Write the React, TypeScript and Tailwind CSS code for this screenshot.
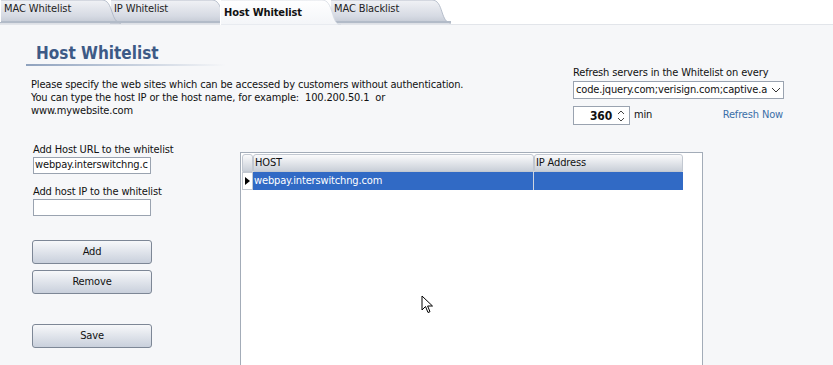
import React from "react";

const font = { fontFamily: '"DejaVu Sans Condensed", "DejaVu Sans", Tahoma, sans-serif' };

function Tab({ label, active, z }: { label: string; active?: boolean; z: string }) {
  const id = active ? "gA" : "gI";
  return (
    <div className={`relative h-[25px] w-[110px] shrink-0 ${z}`}>
      <svg className="absolute left-0 top-0" width="124" height="25" viewBox="0 0 124 25">
        <defs>
          <linearGradient id={id} x1="0" y1="0" x2="0" y2="1">
            {active ? (
              <>
                <stop offset="0" stopColor="#ffffff" />
                <stop offset="1" stopColor="#f3f5f8" />
              </>
            ) : (
              <>
                <stop offset="0" stopColor="#f1f2f6" />
                <stop offset="0.7" stopColor="#d6dae3" />
                <stop offset="1" stopColor="#c3c9d4" />
              </>
            )}
          </linearGradient>
        </defs>
        <path
          d={active ? "M0,0 H102 C108,0 110,6 112,12 C114,19 116,25 121,25 H0 Z" : "M0,0 H102 C108,0 110,6 112,12 C114,18 116,23 121,23 H0 Z"}
          fill={`url(#${id})`}
          stroke={active ? "#d5dae2" : "#aab3c1"}
          strokeWidth="0.8"
        />
        {!active && <rect x="0" y="21" width="121" height="2" fill="#b2bbc8" />}
        <rect x="0" y="0" width="1" height={active ? 25 : 22} fill="#ffffff" />
      </svg>
      <span
        className={`absolute left-[4px] whitespace-nowrap text-[11px] tracking-[-0.1px] ${active ? "top-[5px] font-bold text-[#111]" : "top-[1px] text-[#222]"}`}
      >
        {label}
      </span>
    </div>
  );
}

function Btn({ label }: { label: string }) {
  return (
    <div className="flex h-[24px] w-[120px] items-center justify-center rounded-[3px] border border-[#7d8796] bg-gradient-to-b from-[#f7f8fa] to-[#c9d0dc] text-[11px] text-[#111]">
      {label}
    </div>
  );
}

export default function App() {
  return (
    <div className="relative h-[365px] w-[833px] overflow-hidden bg-[#f6f7f9] text-[11px] tracking-[-0.15px] text-[#111]" style={font}>
      {/* tab strip */}
      <div className="flex h-[25px] border-b border-[#e2e5ea] bg-white">
        <Tab label="MAC Whitelist" z="z-40" />
        <Tab label="IP Whitelist" z="z-30" />
        <Tab label="Host Whitelist" active z="z-50" />
        <Tab label="MAC Blacklist" z="z-10" />
      </div>

      {/* top section */}
      <div className="flex">
        <div className="w-[540px] pl-[26px]">
          <div className="mt-[18px] pl-[10px] text-[17px] font-bold leading-[20px] tracking-normal text-[#3d5a86]">Host Whitelist</div>
          <div className="mt-[1px] h-[2px] w-[200px] bg-gradient-to-r from-[#8fa2be] to-transparent" />
          <div className="mt-[12px] pl-[5px] leading-[13px] text-[#111]">
            <div>Please specify the web sites which can be accessed by customers without authentication.</div>
            <div>You can type the host IP or the host name, for example:&nbsp; 100.200.50.1&nbsp; or</div>
            <div>www.mywebsite.com</div>
          </div>
        </div>
        <div className="ml-[33px] mt-[41px] w-[211px]">
          <div className="whitespace-nowrap leading-[13px]">Refresh servers in the Whitelist on every</div>
          <div className="mt-[2px] flex h-[18px] w-[211px] items-center border border-[#9aa3b0] bg-white pl-[2px]">
            <span className="flex-1 overflow-hidden whitespace-nowrap">code.jquery.com;verisign.com;captive.a</span>
            <svg width="14" height="10" viewBox="0 0 14 10" className="shrink-0 bg-white">
              <path d="M3,3 L7,7 L11,3" fill="none" stroke="#333" strokeWidth="1" />
            </svg>
          </div>
          <div className="mt-[7px] flex items-center">
            <div className="flex h-[19px] w-[57px] items-center justify-end border border-[#9aa3b0] bg-white pr-[3px] text-[12px] font-bold">
              <span>360</span>
              <svg width="10" height="14" viewBox="0 0 10 14" className="ml-[4px]">
                <path d="M2,5 L5,2 L8,5 M2,9 L5,12 L8,9" fill="none" stroke="#444" strokeWidth="1" />
              </svg>
            </div>
            <span className="ml-[4px]">min</span>
            <span className="ml-auto mr-[1px] text-[#3b6fa8]">Refresh Now</span>
          </div>
        </div>
      </div>

      {/* bottom section */}
      <div className="mt-[16px] flex">
        <div className="w-[240px] shrink-0 pl-[32px] pt-[2px]">
          <div className="pl-[1px] leading-[13px]">Add Host URL to the whitelist</div>
          <div className="ml-[1px] mt-[1px] flex h-[17px] w-[118px] items-center overflow-hidden whitespace-nowrap border border-[#9aa3b0] bg-white pl-[1px]">
            webpay.interswitchng.c
          </div>
          <div className="mt-[11px] pl-[1px] leading-[13px]">Add host IP to the whitelist</div>
          <div className="ml-[1px] mt-[1px] h-[17px] w-[118px] border border-[#9aa3b0] bg-white" />
          <div className="mt-[24px] flex flex-col gap-[6px]">
            <Btn label="Add" />
            <Btn label="Remove" />
          </div>
          <div className="mt-[30px]">
            <Btn label="Save" />
          </div>
        </div>
        <div className="mt-[11px] h-[240px] w-[463px] border border-[#a3acb8] bg-white pl-[1px] pt-[1px]">
          <div className="flex h-[18px]">
            <div className="h-[18px] w-[11px] rounded-t-[3px] border border-[#c2c8d1] bg-gradient-to-b from-[#fbfbfc] to-[#c9cfd8]" />
            <div className="flex h-[18px] w-[281px] items-center rounded-t-[3px] border border-[#c2c8d1] bg-gradient-to-b from-[#fbfbfc] to-[#c9cfd8] pl-[1px]">HOST</div>
            <div className="flex h-[18px] w-[149px] items-center rounded-t-[3px] border border-[#c2c8d1] bg-gradient-to-b from-[#fbfbfc] to-[#c9cfd8] pl-[1px]">IP Address</div>
          </div>
          <div className="flex h-[18px]">
            <div className="flex h-[18px] w-[11px] items-center justify-center border border-[#c2c8d1] bg-white">
              <svg width="5" height="8" viewBox="0 0 5 8"><path d="M0,0 L5,4 L0,8 Z" fill="#000" /></svg>
            </div>
            <div className="flex h-[18px] w-[281px] items-center border-r border-[#d0d6e0] bg-[#316ac5] pl-[1px] text-white">webpay.interswitchng.com</div>
            <div className="h-[18px] w-[149px] bg-[#316ac5]" />
          </div>
        </div>
      </div>

      {/* mouse cursor */}
      <svg className="absolute left-[421px] top-[295px]" width="13" height="20" viewBox="0 0 13 20">
        <path d="M1,1 L1,15 L4.5,11.5 L7,17.5 L9,16.7 L6.6,11 L11.5,11 Z" fill="#fff" stroke="#000" strokeWidth="1" strokeLinejoin="miter" />
      </svg>
    </div>
  );
}
